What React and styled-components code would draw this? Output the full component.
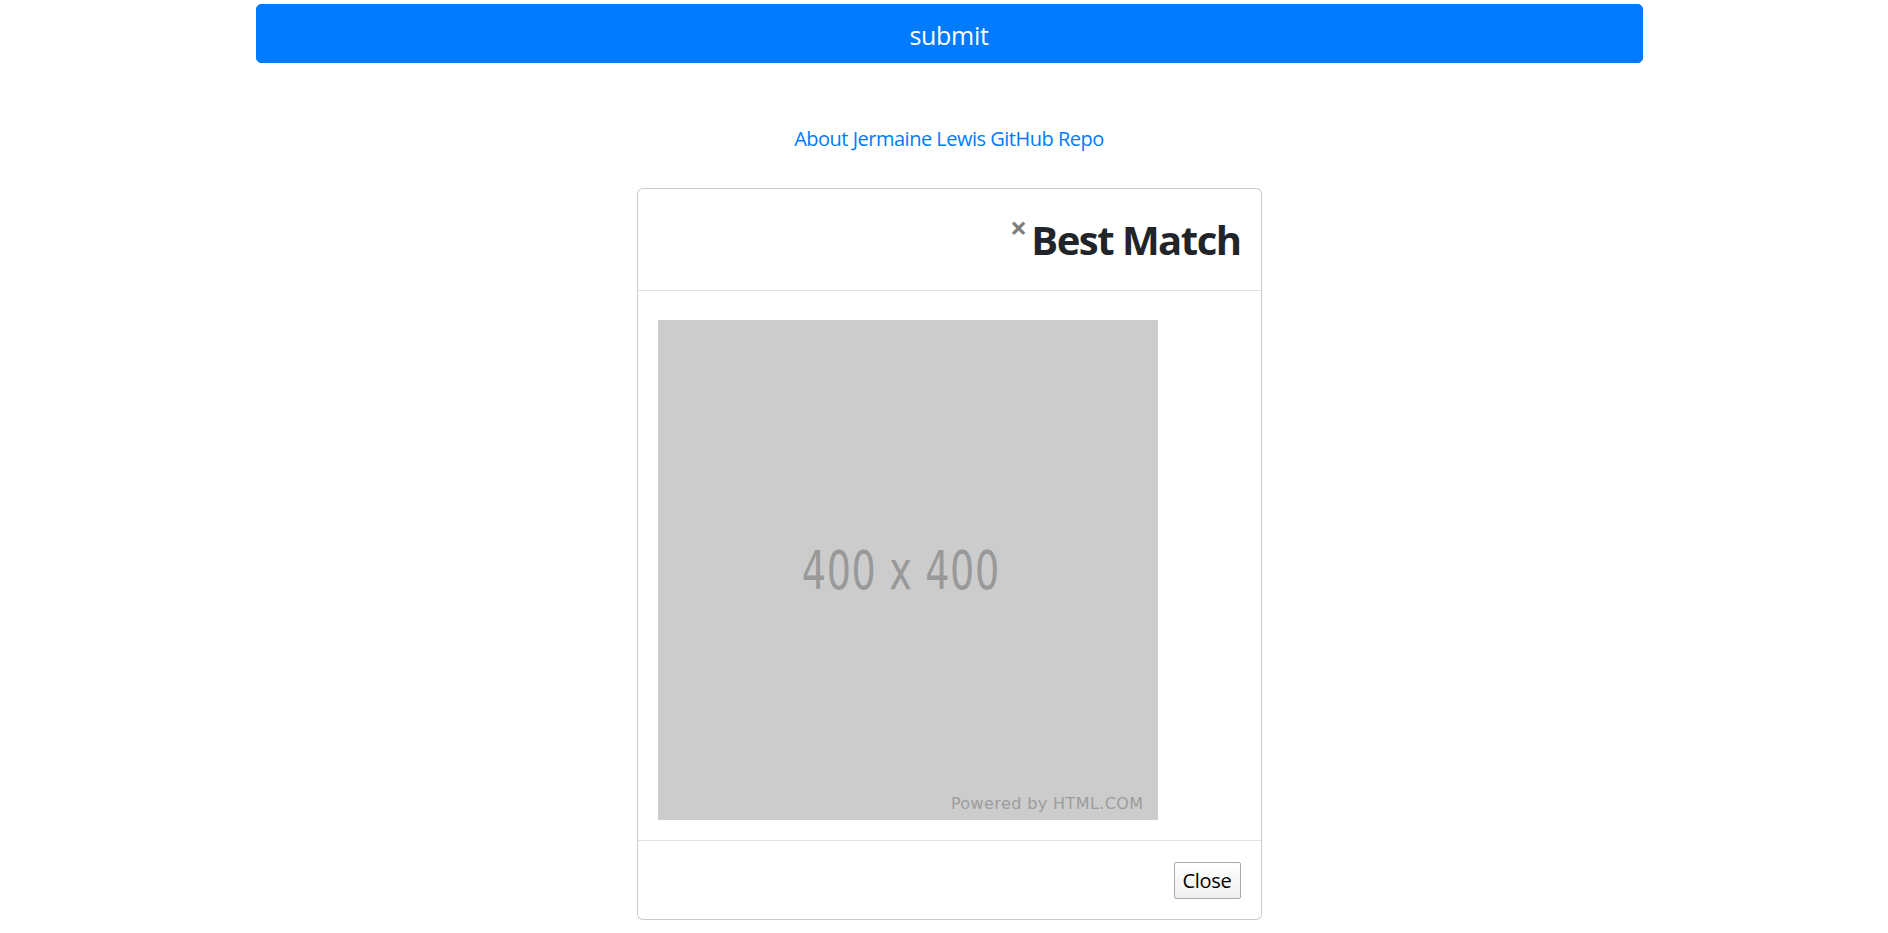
import React from 'react';
import styled, { createGlobalStyle } from 'styled-components';

const GlobalStyle = createGlobalStyle`
  html, body {
    margin: 0;
    padding: 0;
    background: #fff;
  }
  body {
    font-family: "Segoe UI", "Open Sans", "Liberation Sans", sans-serif;
    color: #212529;
  }
  * {
    box-sizing: border-box;
  }
`;

const Page = styled.div`
  display: flex;
  flex-direction: column;
  align-items: center;
  padding: 4px 0 0 10px;
`;

const SubmitButton = styled.button`
  width: 1387px;
  padding: 12px 0 8px;
  font-family: inherit;
  font-size: 25px;
  line-height: 37px;
  letter-spacing: -0.3px;
  color: #fff;
  background-color: #007bff;
  border: 1px solid #007bff;
  border-radius: 5px;
  cursor: pointer;
`;

const RepoLink = styled.a`
  margin-top: 61px;
  font-size: 20px;
  line-height: 30px;
  letter-spacing: -0.5px;
  color: #007bff;
  text-decoration: none;
`;

const Modal = styled.div`
  margin-top: 34px;
  width: 625px;
  background: #fff;
  border: 1px solid rgba(0, 0, 0, 0.2);
  border-radius: 6px;
  display: flex;
  flex-direction: column;
`;

const ModalHeader = styled.div`
  display: flex;
  justify-content: flex-end;
  align-items: flex-start;
  padding: 21px 20px 20px;
  border-bottom: 1px solid #dee2e6;
`;

const CloseX = styled.button`
  margin-top: 10px;
  margin-right: 4px;
  padding: 0;
  background: transparent;
  border: 0;
  font-family: inherit;
  font-size: 30px;
  font-weight: 700;
  line-height: 16px;
  color: #000;
  opacity: 0.5;
  cursor: pointer;
`;

const Title = styled.h2`
  margin: 0;
  font-size: 40px;
  font-weight: 700;
  line-height: 60px;
  letter-spacing: -1.5px;
  color: #212529;
`;

const ModalBody = styled.div`
  padding: 29px 20px 20px;
`;

const Placeholder = styled.div`
  position: relative;
  width: 500px;
  height: 500px;
  background: #cccccc;
  display: flex;
  align-items: center;
  justify-content: center;
`;

const SizeLabel = styled.span`
  display: inline-block;
  margin-left: -14px;
  font-family: "DejaVu Sans Condensed", "DejaVu Sans", sans-serif;
  font-size: 53px;
  color: #999999;
  transform: scaleX(0.8);
  letter-spacing: 0.8px;
`;

const Powered = styled.span`
  position: absolute;
  right: 14px;
  bottom: 7px;
  font-family: "DejaVu Sans", sans-serif;
  font-size: 16px;
  letter-spacing: 0.4px;
  color: #9c9c9c;
`;

const ModalFooter = styled.div`
  display: flex;
  justify-content: flex-end;
  padding: 21px 20px 20px;
  border-top: 1px solid #dee2e6;
`;

const FooterButton = styled.button`
  height: 37px;
  padding: 0 8px;
  font-family: inherit;
  font-size: 20px;
  letter-spacing: -0.3px;
  color: #000;
  background: linear-gradient(#ffffff, #efefef);
  border: 1px solid #a9a9a9;
  border-radius: 2px;
`;

export default function App() {
  return (
    <>
      <GlobalStyle />
      <Page>
        <SubmitButton type="button">submit</SubmitButton>
        <RepoLink href="#">About Jermaine Lewis GitHub Repo</RepoLink>
        <Modal>
          <ModalHeader>
            <CloseX type="button">×</CloseX>
            <Title>Best Match</Title>
          </ModalHeader>
          <ModalBody>
            <Placeholder>
              <SizeLabel>400 x 400</SizeLabel>
              <Powered>Powered by HTML.COM</Powered>
            </Placeholder>
          </ModalBody>
          <ModalFooter>
            <FooterButton type="button">Close</FooterButton>
          </ModalFooter>
        </Modal>
      </Page>
    </>
  );
}
